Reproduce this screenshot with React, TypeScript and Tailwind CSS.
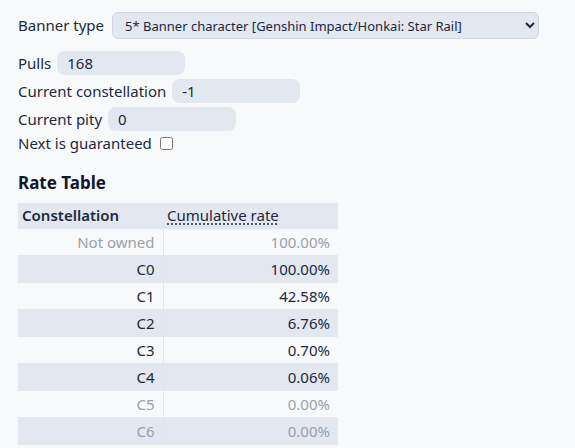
import React, { useState } from 'react';

const rows = [
  { label: 'Not owned', rate: '100.00%', muted: true },
  { label: 'C0', rate: '100.00%' },
  { label: 'C1', rate: '42.58%' },
  { label: 'C2', rate: '6.76%' },
  { label: 'C3', rate: '0.70%' },
  { label: 'C4', rate: '0.06%' },
  { label: 'C5', rate: '0.00%', muted: true },
  { label: 'C6', rate: '0.00%', muted: true },
];

const inputCls =
  'h-6 w-[128px] rounded-lg bg-[#e2e7f0] px-2.5 text-[15px] text-[#1e293b] outline-none';

export default function App() {
  const [guaranteed, setGuaranteed] = useState(false);

  return (
    <div className="min-h-[448px] bg-[#f8f9fb] px-[18px] pt-3 font-['Noto_Sans',sans-serif] text-[15px] text-[#1e293b]">
      <div className="flex h-[27px] items-center gap-2">
        <span>Banner type</span>
        <select className="h-[27px] w-[427px] rounded-md border border-[#cfd6e0] bg-[#e2e7f0] px-2 text-[13px] text-[#1e293b] outline-none">
          <option>5* Banner character [Genshin Impact/Honkai: Star Rail]</option>
        </select>
      </div>

      <div className="mt-3 flex flex-col gap-1">
        <label className="flex h-6 items-center gap-1.5">
          Pulls
          <input className={inputCls} defaultValue="168" />
        </label>
        <label className="flex h-6 items-center gap-1.5">
          Current constellation
          <input className={inputCls} defaultValue="-1" />
        </label>
        <label className="flex h-6 items-center gap-1.5">
          Current pity
          <input className={inputCls} defaultValue="0" />
        </label>
        <label className="-mt-1 flex h-6 items-center gap-2">
          Next is guaranteed
          <input
            type="checkbox"
            checked={guaranteed}
            onChange={(e) => setGuaranteed(e.target.checked)}
            className="h-[13px] w-[13px]"
          />
        </label>
      </div>

      <h2 className="mt-[15px] text-[17px] font-bold text-[#0f172a]">Rate Table</h2>

      <table className="mt-[7px] w-[320px] border-collapse text-[15px]">
        <thead>
          <tr className="h-[26px] bg-[#e2e7f0]">
            <th className="w-[145px] px-1 text-left font-semibold">Constellation</th>
            <th className="px-1 text-left font-normal">
              <span className="underline decoration-dotted underline-offset-2">Cumulative rate</span>
            </th>
          </tr>
        </thead>
        <tbody>
          {rows.map((r, i) => (
            <tr
              key={r.label}
              className={`h-[27px] border-b border-[#e6e8ec] ${i % 2 === 1 ? 'bg-[#e2e7f0]' : ''} ${
                r.muted ? 'text-[#9aa0a8]' : ''
              }`}
            >
              <td className="border-r border-[#e3e5e9] px-2 text-right">{r.label}</td>
              <td className="px-2 text-right">{r.rate}</td>
            </tr>
          ))}
        </tbody>
      </table>
    </div>
  );
}
